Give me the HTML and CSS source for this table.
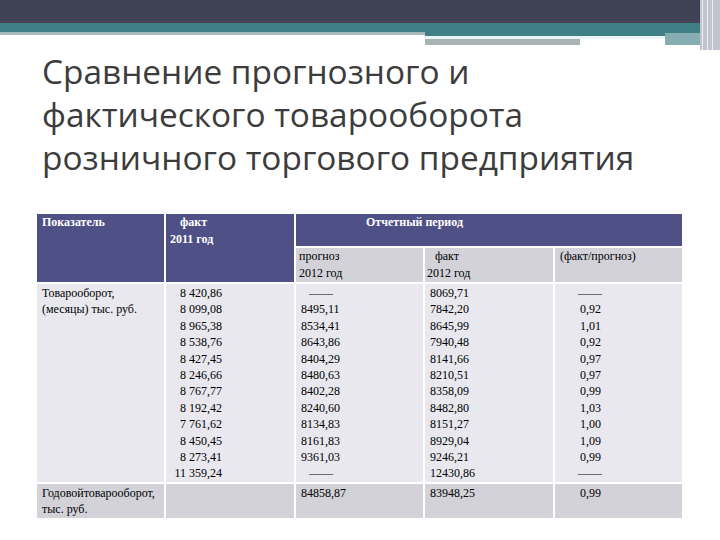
FILE: index.html
```html
<!DOCTYPE html>
<html lang="ru">
<head>
<meta charset="utf-8">
<title>Сравнение</title>
<link rel="stylesheet" href="styles.css">
</head>
<body>
<div class="band">
  <div class="col col-a">
    <div class="s dark"></div><div class="s plum"></div><div class="s teal t9"></div><div class="s pale3"></div>
  </div>
  <div class="col col-b">
    <div class="s dark"></div><div class="s plum"></div><div class="s teal t13"></div><div class="s whiteish"></div><div class="s grey6"></div>
  </div>
  <div class="col col-c">
    <div class="s dark"></div><div class="s plum"></div><div class="s teal t13"></div><div class="s whiteish"></div>
  </div>
  <div class="col col-d">
    <div class="s dark"></div><div class="s plum"></div><div class="s teal t10"></div><div class="s teal2"></div>
  </div>
  <div class="col col-e">
    <div class="edge"><i></i><i></i><i></i></div>
  </div>
</div>

<h1 class="title">Сравнение прогнозного и<br>фактического товарооборота<br>розничного торгового предприятия</h1>

<div class="wrap">
<table class="grid">
  <tr class="h1">
    <td class="hd c1" rowspan="2">Показатель</td>
    <td class="hd c2" rowspan="2"><span class="ind10">факт</span><br>2011 год</td>
    <td class="hd period" colspan="3">Отчетный период</td>
  </tr>
  <tr class="h2">
    <td class="sub c3">прогноз<br>2012 год</td>
    <td class="sub c4"><span class="ind8">факт</span><br>2012 год</td>
    <td class="sub c5">(факт/прогноз)</td>
  </tr>
  <tr class="b1">
    <td class="c1">Товарооборот,<br>(месяцы) тыс. руб.</td>
    <td class="c2 num">8 420,86<br>8 099,08<br>8 965,38<br>8 538,76<br>8 427,45<br>8 246,66<br>8 767,77<br>8 192,42<br>7 761,62<br>8 450,45<br>8 273,41<br>11 359,24</td>
    <td class="c3"><span class="dash3">——</span><br>8495,11<br>8534,41<br>8643,86<br>8404,29<br>8480,63<br>8402,28<br>8240,60<br>8134,83<br>8161,83<br>9361,03<br><span class="dash3">——</span></td>
    <td class="c4">8069,71<br>7842,20<br>8645,99<br>7940,48<br>8141,66<br>8210,51<br>8358,09<br>8482,80<br>8151,27<br>8929,04<br>9246,21<br>12430,86</td>
    <td class="c5"><span class="dash5">——</span><br>0,92<br>1,01<br>0,92<br>0,97<br>0,97<br>0,99<br>1,03<br>1,00<br>1,09<br>0,99<br><span class="dash5">——</span></td>
  </tr>
  <tr class="b2">
    <td class="c1">Годовойтоварооборот,<br>тыс. руб.</td>
    <td class="c2"></td>
    <td class="c3">84858,87</td>
    <td class="c4">83948,25</td>
    <td class="c5">0,99</td>
  </tr>
</table>
</div>
</body>
</html>
```

FILE: styles.css
```css
html, body { margin: 0; padding: 0; background: #ffffff; }
body { width: 720px; height: 540px; overflow: hidden; font-family: "Liberation Serif", serif; }

.band { display: flex; height: 50px; }
.col { display: flex; flex-direction: column; }
.col-a { width: 425px; }
.col-b { width: 155px; }
.col-c { width: 85px; }
.col-d { width: 35px; }
.col-e { width: 20px; }
.s { width: 100%; }
.dark { height: 21px; background: #3e4254; }
.plum { height: 2px; background: #4a4259; }
.teal { background: #3f8087; }
.t9 { height: 9px; }
.t10 { height: 10px; }
.t13 { height: 13px; }
.pale3 { height: 3px; background: #a6b8b9; }
.whiteish { height: 3px; background: #eaf6f6; }
.grey6 { height: 6px; background: #a8b4b4; }
.teal2 { height: 12px; background: #86aeb2; }
.edge { height: 50px; background: #c4c4d0; display: flex; gap: 4px; padding-left: 2px; }
.edge i { display: block; width: 1px; height: 100%; background: #eceef2; }

.title {
  margin: 0;
  padding: 0 0 0 42px;
  font-family: "Open Sans", "Noto Sans", sans-serif;
  font-weight: 400;
  font-size: 33.4px;
  line-height: 43px;
  color: #3c3c3c;
  height: 162px;
}

.wrap { padding-left: 35px; }
.grid {
  border-collapse: separate;
  border-spacing: 2px;
  font-size: 12px;
  color: #000;
}
.grid td { vertical-align: top; padding: 0; line-height: 16.4px; }
.c1 { width: 122px; padding-left: 5px !important; }
.c2 { width: 124px; padding-left: 4px !important; }
.c3 { width: 122px; padding-left: 5px !important; }
.c4 { width: 123px; padding-left: 5px !important; }
.c5 { width: 102px; padding-left: 25px !important; }

.hd { background: #4f5086; color: #fff; font-weight: bold; line-height: 17px !important; }
.h1 td { height: 32px; }
.period { padding-left: 70px !important; }
.h2 td { height: 33px; }
.sub { background: #d2d2d8; line-height: 17px !important; }
.sub.c4 { padding-left: 2px !important; }
.sub.c3 { padding-left: 3px !important; }
.sub.c5 { padding-left: 5px !important; }
.ind10 { margin-left: 10px; }
.ind8 { margin-left: 8px; }

.b1 td { background: #e8e8ee; height: 196px; padding-top: 1px; }
.b1 .num { text-align: right; padding-right: 72px; padding-left: 0 !important; width: 56px; }
.dash3 { margin-left: 8px; }
.dash5 { margin-left: -2px; }
.b2 td { background: #d2d2d8; height: 32px; padding-top: 1px; }
```
